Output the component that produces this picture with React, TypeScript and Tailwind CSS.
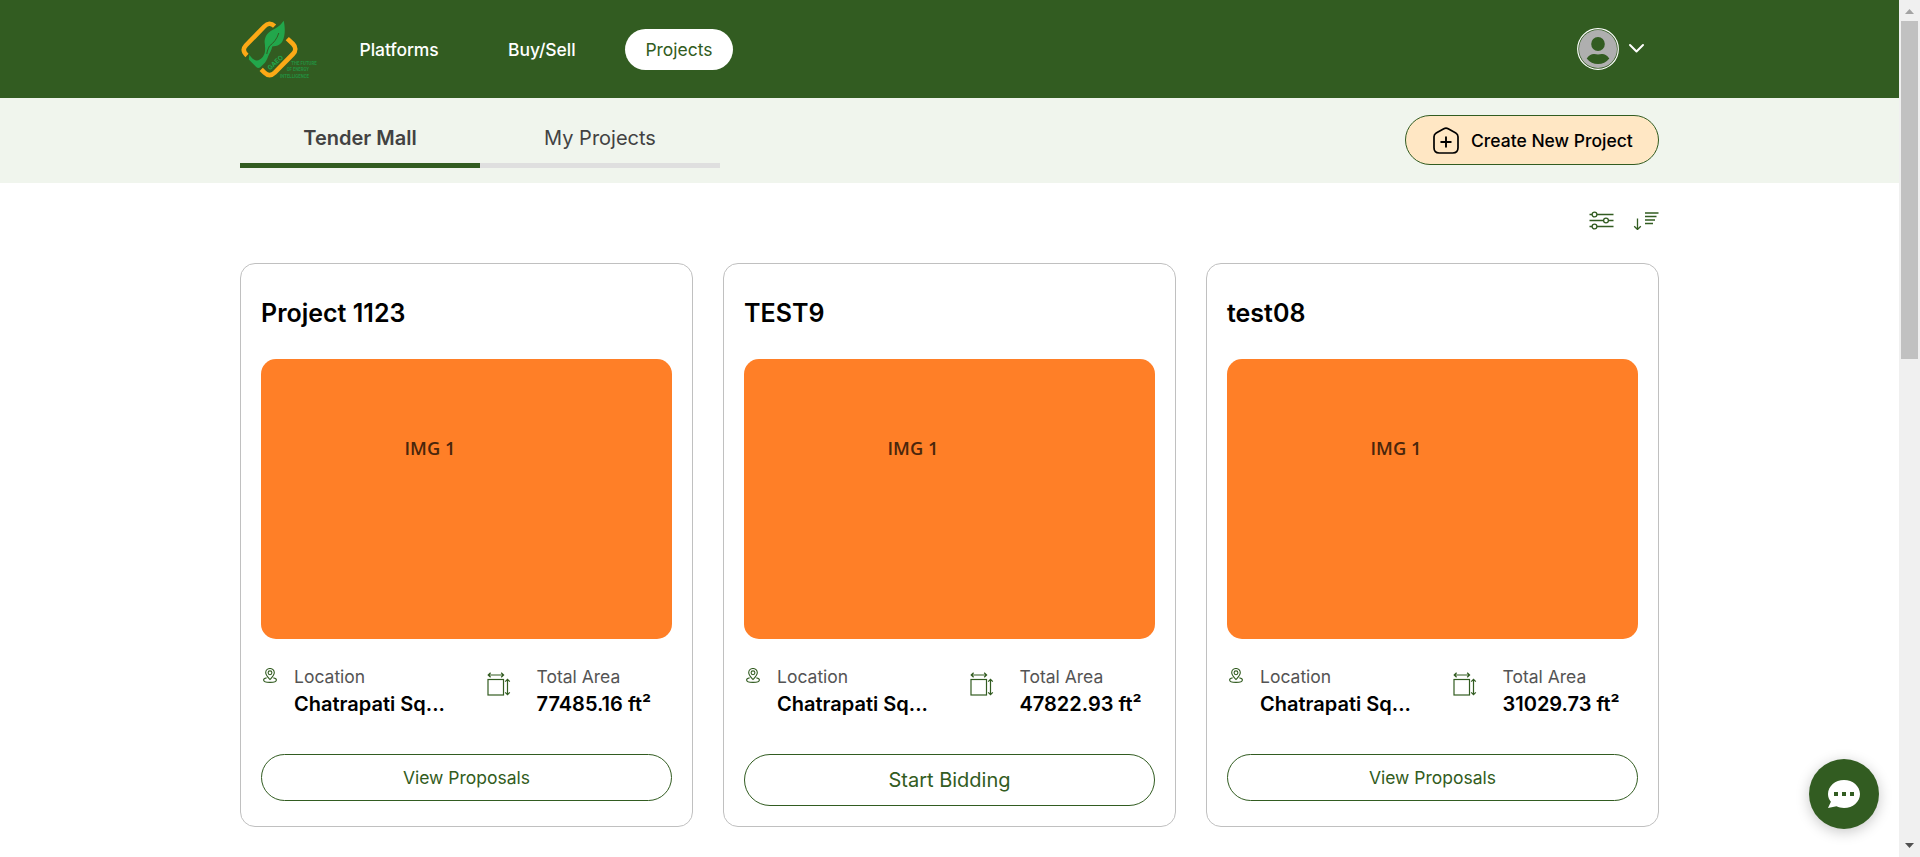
import React from "react";

const projects = [
  { name: "Project 1123", area: "77485.16 ft²", bidding: false },
  { name: "TEST9", area: "47822.93 ft²", bidding: true },
  { name: "test08", area: "31029.73 ft²", bidding: false },
];

function Logo() {
  return (
    <svg width="80" height="62" viewBox="0 0 80 62" className="block overflow-visible" fill="none">
      <g stroke="#fca916" strokeWidth="4.600">
        <path d="M7 37.500C3 33.800 2.800 30.800 5.800 27.500L24.300 8.500C27.600 5 31 4.700 34.600 8.200" />
        <path d="M47.300 20.600L53 26c3 3 3 7 0 10L34.700 54.600c-3.400 3.300-6.800 3.300-10.200 0l-3.300-3.300" />
      </g>
      <path
        d="M43.700 2.700C45.200 9 45.400 17.500 42.600 23c-2.300 4.200-5.900 5.200-10.300 5.400-.6 3.600-2.700 6.200-4 9.600-1 3-2 5-3.400 6.700L20.600 48.900c-1.500 1.400-3 1.200-4.400 0L8.800 41.500 9.300 36.800c2.700 3.700 5.200 6 7.700 5.700 4-.6 6.800-4 7.800-8C25.500 31 25 28 24.600 24c0-6 3.400-10.200 10.200-13.300 4-2.200 6.700-4.700 8.900-8z"
        fill="#22a64b"
      />
      <path d="M38.800 15C37 21 33.500 25 29.500 28 28 31 27.200 33 26.800 36" stroke="#325c21" strokeWidth="1" />
      <text
        x="30"
        y="52.500"
        transform="rotate(-42 30 52.500)"
        fontFamily="Inter, sans-serif"
        fontWeight="700"
        fontSize="6.500"
        textLength="18.500"
        fill="#22a64b"
      >
        GAEO
      </text>
      <g fontFamily="Roboto, sans-serif" fontWeight="700" fontSize="5.800" fill="#239040">
        <text x="51.300" y="46.900" textLength="25.400" lengthAdjust="spacingAndGlyphs">THE FUTURE</text>
        <text x="46.700" y="53.300" textLength="22.300" lengthAdjust="spacingAndGlyphs">OF ENERGY</text>
        <text x="40" y="59.700" textLength="29" lengthAdjust="spacingAndGlyphs">INTELLIGENCE</text>
      </g>
    </svg>
  );
}

function Avatar() {
  return (
    <svg width="42" height="42" viewBox="0 0 42 42" className="block">
      <circle cx="21" cy="21" r="20.300" fill="none" stroke="#fff" strokeWidth="1.200" />
      <circle cx="21" cy="21" r="19" fill="#afafaf" />
      <ellipse cx="21" cy="16" rx="6.800" ry="7" fill="#325c21" />
      <path d="M9.700 30.500c2.800-3.600 5-4.600 7.600-4.400 2.400.5 5 .5 7.400 0 2.600-.2 4.800.8 7.600 4.400-3 3.700-6.800 5.600-11.300 5.600s-8.300-1.900-11.300-5.600z" fill="#325c21" />
    </svg>
  );
}

function PinIcon() {
  return (
    <svg width="14" height="15" viewBox="0 0 14 15" className="block" fill="none" stroke="#325c21" strokeWidth="1.100">
      <path d="M7 11.500C4.600 8.900 2.700 7 2.700 4.700a4.300 4.200 0 0 1 8.600 0C11.300 7 9.400 8.900 7 11.500z" />
      <circle cx="7" cy="4.800" r="1.900" />
      <path d="M3.600 9.900C1.800 10.200.6 10.900.6 11.900c0 1.500 2.900 2.500 6.400 2.500s6.400-1 6.400-2.500c0-1-1.200-1.700-3-2" />
    </svg>
  );
}

function AreaIcon() {
  return (
    <svg width="24" height="24" viewBox="0 0 24 24" className="block" fill="none" stroke="#325c21" strokeWidth="1.200">
      <rect x="1" y="7.500" width="15.500" height="15.500" />
      <path d="M1.200 3h15.400M3.600.7L1.200 3l2.400 2.300M14.200.7L16.600 3l-2.400 2.300" />
      <path d="M20.500 7.300v15.400M18.200 9.700l2.300-2.400 2.300 2.400M18.200 20.300l2.300 2.400 2.300-2.400" />
    </svg>
  );
}

function ProjectCard({ name, area, bidding }: { name: string; area: string; bidding: boolean }) {
  return (
    <article className="flex h-[564px] flex-col rounded-[15px] border border-[#c0c0c0] px-5">
      <h2 className="mt-[34px] h-[30px] text-[25px] leading-[30px] font-semibold">{name}</h2>
      <div className="mt-[31px] h-[280px] shrink-0 rounded-[15px] bg-[#ff7f27] pt-[77px] pl-[143.5px]">
        <span className="block font-['Open_Sans',sans-serif] text-[18.3px] leading-6 font-semibold text-[#4a260c]">IMG 1</span>
      </div>
      <div className="mt-[25px] flex h-[60px] shrink-0">
        <div className="w-[33px] pt-[4px] pl-[2px]"><PinIcon /></div>
        <div className="w-[193px]">
          <p className="text-[17.5px] leading-[26px] text-[#545454]">Location</p>
          <p className="text-[20px] leading-[28px] font-semibold">Chatrapati Sq...</p>
        </div>
        <div className="w-[49.5px] pt-[8px]"><AreaIcon /></div>
        <div className="whitespace-nowrap">
          <p className="text-[17.5px] leading-[26px] text-[#545454]">Total Area</p>
          <p className="text-[20px] leading-[28px] font-semibold">{area}</p>
        </div>
      </div>
      <button
        className={
          bidding
            ? "mt-[30px] h-[52px] shrink-0 rounded-full border border-[#325c21] text-[20px] text-[#325c21]"
            : "mt-[30px] h-[47px] shrink-0 rounded-full border border-[#325c21] pt-[2px] text-[17.5px] text-[#325c21]"
        }
      >
        {bidding ? "Start Bidding" : "View Proposals"}
      </button>
    </article>
  );
}

export default function App() {
  return (
    <div className="flex h-[857px] w-full overflow-hidden bg-white font-['Inter',sans-serif] text-black">
      <div className="min-w-0 flex-1">
        <header className="h-[98px] bg-[#325c21]">
          <div className="mx-auto flex h-full w-[1419px] items-center">
            <Logo />
            <nav className="flex items-center text-[17.5px] text-white">
              <a className="ml-[39.5px] w-[148.5px] pt-[2px] font-medium tracking-[-0.06px]">Platforms</a>
              <a className="w-[117px] pt-[2px] font-medium tracking-[-0.06px]">Buy/Sell</a>
              <a className="flex h-[41px] w-[108px] items-center justify-center rounded-full bg-white pt-[2px] text-[#325c21]">Projects</a>
            </nav>
            <div className="mr-[14px] ml-auto flex items-center gap-[9px]">
              <Avatar />
              <svg width="17" height="11" viewBox="0 0 17 11" fill="none" stroke="#fff" strokeWidth="2" strokeLinecap="round" strokeLinejoin="round" className="mb-px">
                <path d="M2 2l6.500 6.500L15 2" />
              </svg>
            </div>
          </div>
        </header>

        <section className="h-[85px] bg-[#f0f5ed]">
          <div className="mx-auto flex w-[1419px] justify-between">
            <div className="flex text-center text-[20px] leading-[30px] text-[#424242]">
              <div className="h-[70px] w-60 border-b-5 border-[#325c21] pt-[25px] font-semibold">Tender Mall</div>
              <div className="h-[70px] w-60 border-b-5 border-[#dfdfdf] pt-[25px]">My Projects</div>
            </div>
            <button className="mt-[17px] flex h-[50px] w-[254px] items-center rounded-full border border-[#325c21] bg-[#ffe7c4] pl-[27px] text-[17.5px] font-medium">
              <svg width="26" height="27" viewBox="0 0 26 27" fill="none" stroke="#000" strokeWidth="1.700" strokeLinecap="round" strokeLinejoin="round">
                <path d="M10.800 1.700Q13 .5 15.200 1.700L22.800 6Q25 7.300 25 9.700v11.100q0 5.200-5.200 5.200H6.200Q1 26 1 20.800V9.700Q1 7.300 3.200 6z" />
                <path d="M13 10.200v9.600M8.200 15h9.600" strokeWidth="1.900" />
              </svg>
              <span className="ml-[12px] pt-[2px]">Create New Project</span>
            </button>
          </div>
        </section>

        <main className="mx-auto w-[1419px]">
          <div className="flex h-[80px] items-start justify-end gap-[19px] pt-[28px]">
            <svg width="25" height="19" viewBox="0 0 25 19" fill="#fff" stroke="#325c21" strokeWidth="1.300">
              <path d="M.5 3.500h24M.5 9.500h24M.5 15.500h24" />
              <circle cx="5.500" cy="3.500" r="2.400" />
              <circle cx="17" cy="9.500" r="2.400" />
              <circle cx="5.500" cy="15.500" r="2.400" />
            </svg>
            <svg width="26" height="19" viewBox="0 0 26 19" fill="none" stroke="#325c21" strokeWidth="1.300">
              <path d="M4.500 7.500v11M1.200 15.300l3.300 3.200 3.300-3.200" />
              <path d="M12 2h13.500M12 5.500h11.500M12 9h10M12 12.500h8" />
            </svg>
          </div>
          <div className="grid grid-cols-3 gap-[30px]">
            {projects.map((p) => (
              <ProjectCard key={p.name} {...p} />
            ))}
          </div>
        </main>
      </div>

      <div className="flex w-[21px] shrink-0 flex-col items-center bg-[#f0f0f0]">
        <svg width="9" height="5" viewBox="0 0 9 5" className="mt-[9px]"><path d="M0 5L4.500 0 9 5z" fill="#a3a3a3" /></svg>
        <div className="mt-[7px] h-[338px] w-[17px] bg-[#c1c1c1]" />
        <svg width="9" height="5" viewBox="0 0 9 5" className="mt-auto mb-[9px]"><path d="M0 0l4.500 5L9 0z" fill="#505050" /></svg>
      </div>

      <button className="fixed right-[41px] bottom-[28px] flex size-[70px] items-center justify-center rounded-full bg-[#325c21] shadow-[0_3px_14px_rgba(0,0,0,0.22)]">
        <svg width="32" height="28" viewBox="0 0 32 28">
          <path d="M16 0c8.800 0 16 6.200 16 14s-7.200 14-16 14c-2.700 0-5.200-.6-7.500-1.700L0 28l2.900-6.200C1.100 19.600 0 16.900 0 14 0 6.200 7.200 0 16 0z" fill="#fff" />
          <path d="M6 12h4v4H6zM14 12h4v4h-4zM22 12h4v4h-4z" fill="#325c21" />
        </svg>
      </button>
    </div>
  );
}
